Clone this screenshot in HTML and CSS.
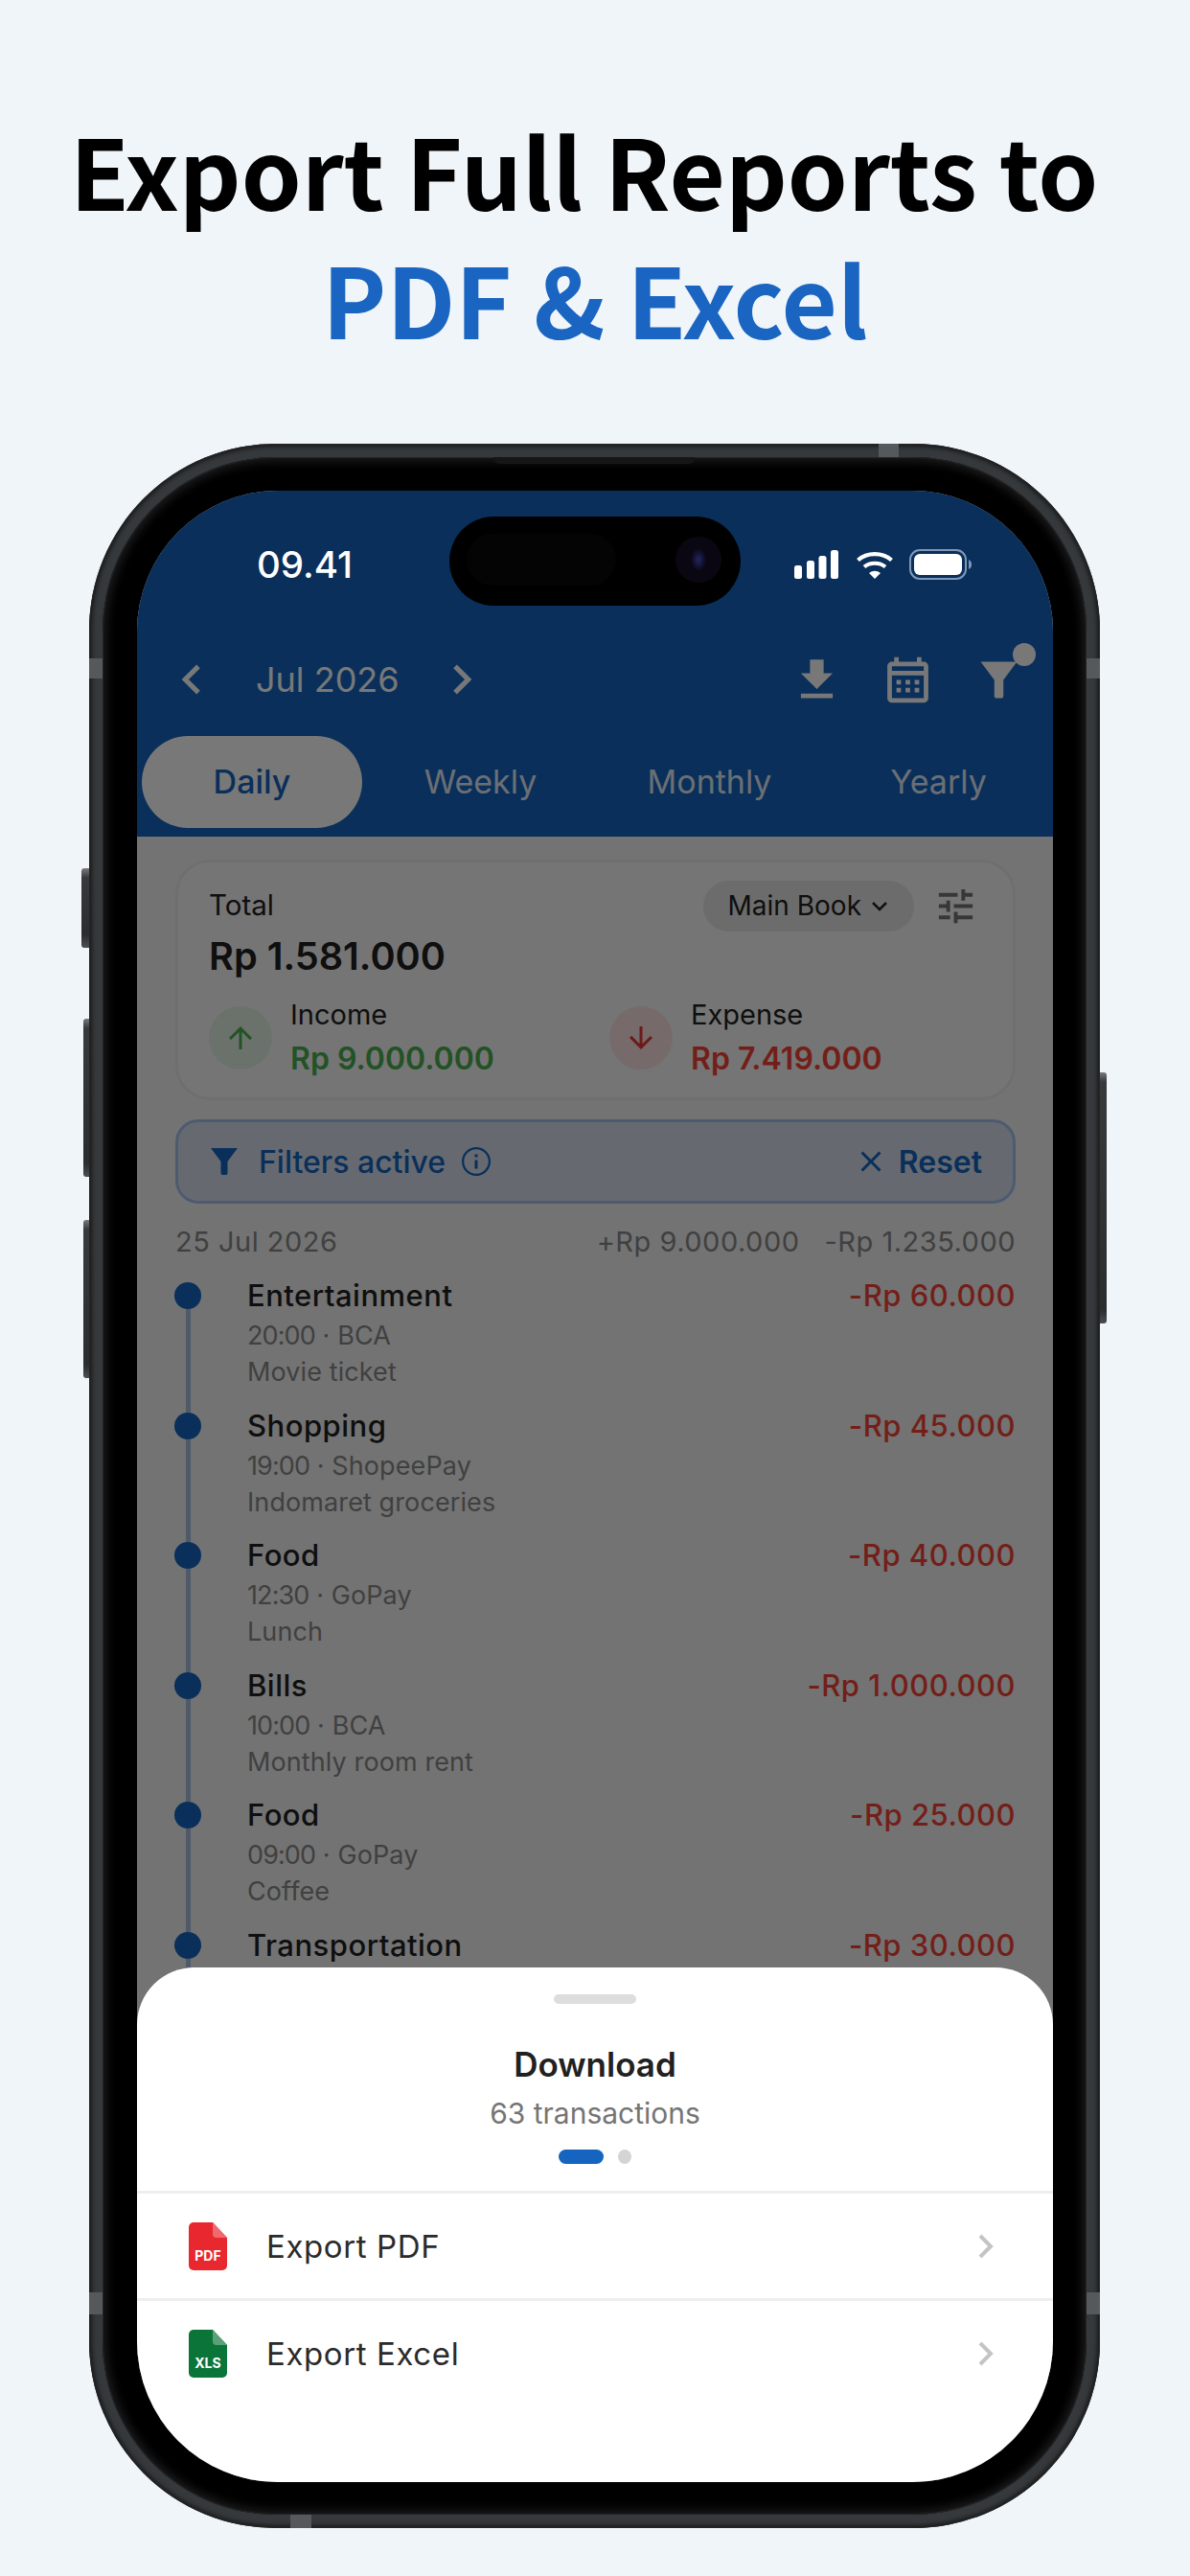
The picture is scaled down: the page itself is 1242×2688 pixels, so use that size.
FILE: index.html
```html
<!doctype html>
<html>
<head>
<meta charset=utf8>
<title>Export Full Reports</title>
<link rel="stylesheet" href="styles.css">
</head>
<body>
<h1 class="headline">Export Full Reports to&nbsp;<br><span class="headline-blue">PDF &amp; Excel</span></h1>

<div class="phone">
    <span class="btn btn-a"></span>
    <span class="btn btn-b"></span>
    <span class="btn btn-c"></span>
    <span class="btn btn-d"></span>
    <span class="band band-top"></span>
    <span class="band band-bottom"></span>
    <span class="band band-l1"></span>
    <span class="band band-l2"></span>
    <span class="band band-r1"></span>
    <span class="band band-r2"></span>

    <div class="bezel">
        <span class="speaker"></span>
        <div class="screen">
            <div class="statusbar">
                <span class="time">09.41</span>
                <div class="status-icons">
                    <svg width="46" height="30" viewBox="0 0 46 30" fill="#fff"><rect x="0" y="16" width="8" height="14" rx="2.5"/><rect x="13" y="11" width="8" height="19" rx="2.5"/><rect x="25.500" y="6" width="8" height="24" rx="2.5"/><rect x="38" y="0" width="8" height="30" rx="2.5"/></svg>
                    <svg width="40" height="30" viewBox="0 0 40 30" fill="none" stroke="#fff" stroke-width="4.2"><path d="M2.500 10.500C12 2 28 2 37.500 10.500"/><path d="M9 17.500C15 12.500 25 12.500 31 17.500"/><path d="M14 24L20 30L26 24C22 21 18 21 14 24Z" fill="#fff" stroke="none"/></svg>
                    <svg class="battery" width="66" height="32" viewBox="0 0 66 32"><rect x="1" y="1" width="58" height="30" rx="10" fill="none" stroke="#7f98b8" stroke-width="2"/><rect x="5" y="5" width="50" height="22" rx="6" fill="#fff"/><path d="M62 11c2.500 1 3 3 3 5s-.5 4-3 5z" fill="#7f98b8"/></svg>
                </div>
            </div>

            <div class="appbar">
                <svg class="chev" viewBox="0 0 24 24"><path d="M15.410 7.410L14 6l-6 6 6 6 1.410-1.410L10.830 12z"/></svg>
                <span class="month">Jul 2026</span>
                <svg class="chev" viewBox="0 0 24 24"><path d="M8.590 16.590L10 18l6-6-6-6-1.410 1.410L13.170 12z"/></svg>
                <div class="appbar-actions">
                    <svg class="action" viewBox="0 0 24 24"><path d="M19 9h-4V3H9v6H5l7 7 7-7zM5 18v2h14v-2H5z"/></svg>
                    <svg class="action" viewBox="0 0 24 24"><path d="M19 4h-1V2h-2v2H8V2H6v2H5c-1.100 0-2 .9-2 2v14c0 1.100.9 2 2 2h14c1.100 0 2-.9 2-2V6c0-1.100-.9-2-2-2zm0 16H5V10h14v10zM5 8V6h14v2H5zm2 4h2v2H7zm4 0h2v2h-2zm4 0h2v2h-2zm-8 3.500h2v2H7zm4 0h2v2h-2zm4 0h2v2h-2z"/></svg>
                    <span class="action-wrap">
                        <svg class="action" viewBox="0 0 24 24"><path d="M4 4h16l-6 8v7c0 .55-.45 1-1 1h-2c-.55 0-1-.45-1-1v-7z"/></svg>
                        <span class="action-dot"></span>
                    </span>
                </div>
            </div>

            <div class="tabs">
                <span class="tab tab-active">Daily</span>
                <span class="tab">Weekly</span>
                <span class="tab">Monthly</span>
                <span class="tab">Yearly</span>
            </div>

            <div class="content">
                <div class="card">
                    <div class="card-top">
                        <span class="total-label">Total</span>
                        <span class="book"><span class="book-name">Main Book</span>
                            <svg width="18" height="12" viewBox="0 0 18 12" fill="none" stroke="#222" stroke-width="2.500"><path d="M2 2l7 7 7-7"/></svg>
                        </span>
                        <svg class="tune" viewBox="0 0 24 24"><path d="M3 17v2h6v-2H3zM3 5v2h10V5H3zm10 16v-2h8v-2h-8v-2h-2v6h2zM7 9v2H3v2h4v2h2V9H7zm14 4v-2H11v2h10zm-6-4h2V7h4V5h-4V3h-2v6z"/></svg>
                    </div>
                    <div class="total-value">Rp 1.581.000</div>
                    <div class="stats">
                        <div class="stat">
                            <span class="stat-ico stat-ico-in"><svg width="36" height="36" viewBox="0 0 24 24"><path d="M4 12l1.410 1.410L11 7.830V20h2V7.830l5.580 5.590L20 12l-8-8-8 8z"/></svg></span>
                            <div>
                                <div class="stat-label">Income</div>
                                <div class="stat-value green">Rp 9.000.000</div>
                            </div>
                        </div>
                        <div class="stat">
                            <span class="stat-ico stat-ico-out"><svg width="36" height="36" viewBox="0 0 24 24"><path d="M20 12l-1.410-1.410L13 16.170V4h-2v12.170l-5.580-5.590L4 12l8 8 8-8z"/></svg></span>
                            <div>
                                <div class="stat-label">Expense</div>
                                <div class="stat-value red">Rp 7.419.000</div>
                            </div>
                        </div>
                    </div>
                </div>

                <div class="filterbar">
                    <svg class="filter-ico" viewBox="0 0 24 24"><path d="M4 4h16l-6 8v7c0 .55-.45 1-1 1h-2c-.55 0-1-.45-1-1v-7z"/></svg>
                    <span class="filter-text">Filters active</span>
                    <svg class="info-ico" viewBox="0 0 24 24"><path d="M11 7h2v2h-2zm0 4h2v6h-2zm1-9C6.480 2 2 6.480 2 12s4.480 10 10 10 10-4.480 10-10S17.520 2 12 2zm0 18.500c-4.690 0-8.500-3.810-8.500-8.500S7.310 3.500 12 3.500s8.500 3.810 8.500 8.500-3.810 8.500-8.500 8.500z"/></svg>
                    <svg class="close-ico" viewBox="0 0 24 24"><path d="M19 6.410L17.590 5 12 10.590 6.410 5 5 6.410 10.590 12 5 17.590 6.410 19 12 13.410 17.590 19 19 17.590 13.410 12z"/></svg>
                    <span class="reset">Reset</span>
                </div>

                <div class="dayrow">
                    <span>25 Jul 2026</span>
                    <span class="day-sums"><span>+Rp 9.000.000</span><span>-Rp 1.235.000</span></span>
                </div>

                <div class="tx">
                    <div class="tx-rail"><span class="tx-dot"></span><span class="tx-line"></span></div>
                    <div class="tx-body"><div class="tx-title">Entertainment</div><div class="tx-sub"><span class="tx-time">20:00</span> · BCA</div><div class="tx-sub">Movie ticket</div></div>
                    <div class="tx-amount">-Rp 60.000</div>
                </div>
                <div class="tx">
                    <div class="tx-rail"><span class="tx-dot"></span><span class="tx-line"></span></div>
                    <div class="tx-body"><div class="tx-title">Shopping</div><div class="tx-sub"><span class="tx-time">19:00</span> · ShopeePay</div><div class="tx-sub">Indomaret groceries</div></div>
                    <div class="tx-amount">-Rp 45.000</div>
                </div>
                <div class="tx">
                    <div class="tx-rail"><span class="tx-dot"></span><span class="tx-line"></span></div>
                    <div class="tx-body"><div class="tx-title">Food</div><div class="tx-sub"><span class="tx-time">12:30</span> · GoPay</div><div class="tx-sub">Lunch</div></div>
                    <div class="tx-amount">-Rp 40.000</div>
                </div>
                <div class="tx">
                    <div class="tx-rail"><span class="tx-dot"></span><span class="tx-line"></span></div>
                    <div class="tx-body"><div class="tx-title">Bills</div><div class="tx-sub"><span class="tx-time">10:00</span> · BCA</div><div class="tx-sub">Monthly room rent</div></div>
                    <div class="tx-amount">-Rp 1.000.000</div>
                </div>
                <div class="tx">
                    <div class="tx-rail"><span class="tx-dot"></span><span class="tx-line"></span></div>
                    <div class="tx-body"><div class="tx-title">Food</div><div class="tx-sub"><span class="tx-time">09:00</span> · GoPay</div><div class="tx-sub">Coffee</div></div>
                    <div class="tx-amount">-Rp 25.000</div>
                </div>
                <div class="tx">
                    <div class="tx-rail"><span class="tx-dot"></span><span class="tx-line"></span></div>
                    <div class="tx-body"><div class="tx-title">Transportation</div></div>
                    <div class="tx-amount">-Rp 30.000</div>
                </div>
            </div>

            <div class="scrim"></div>
            <div class="island">
                <span class="island-pill"></span>
                <span class="island-lens"></span>
            </div>

            <div class="sheet">
                <span class="handle"></span>
                <div class="sheet-title">Download</div>
                <div class="sheet-sub">63 transactions</div>
                <div class="pager"><span class="pager-on"></span><span class="pager-off"></span></div>
                <div class="sheet-row">
                    <svg class="doc" viewBox="0 0 40 50"><path d="M5 0H25L40 16V45a5 5 0 0 1-5 5H5a5 5 0 0 1-5-5V5a5 5 0 0 1 5-5z" fill="#e8272e"/><path d="M25 0L40 16H29a4 4 0 0 1-4-4z" fill="#f0696c"/><text x="20" y="39.500" text-anchor="middle" class="doc-text">PDF</text></svg>
                    <span class="sheet-label">Export PDF</span>
                    <svg class="sheet-chev" viewBox="0 0 16 26"><path d="M2 2l11 11L2 24"/></svg>
                </div>
                <div class="sheet-row">
                    <svg class="doc" viewBox="0 0 40 50"><path d="M5 0H25L40 16V45a5 5 0 0 1-5 5H5a5 5 0 0 1-5-5V5a5 5 0 0 1 5-5z" fill="#0b7539"/><path d="M25 0L40 16H29a4 4 0 0 1-4-4z" fill="#5ba077"/><text x="20" y="39.500" text-anchor="middle" class="doc-text">XLS</text></svg>
                    <span class="sheet-label">Export Excel</span>
                    <svg class="sheet-chev" viewBox="0 0 16 26"><path d="M2 2l11 11L2 24"/></svg>
                </div>
            </div>
        </div>
    </div>
</div>
</body>
</html>
```
FILE: styles.css
```css
html, body { margin: 0; padding: 0; }
body {
    width: 1242px;
    height: 2688px;
    overflow: hidden;
    background: #f0f5fa;
    font-family: Inter, sans-serif;
}

.headline {
    margin: 0;
    padding-top: 109px;
    height: 351px;
    box-sizing: border-box;
    text-align: center;
    font-family: "Noto Sans CJK JP", "Noto Sans", sans-serif;
    font-size: 100.700px;
    line-height: 134px;
    font-weight: 700;
    color: #000;
}
.headline-blue { color: #1a65c2; }

/* device frame */
.phone {
    position: relative;
    box-sizing: border-box;
    margin: 112px 0 0 93px;
    width: 1055px;
    height: 2175px;
    padding: 14px;
    border-radius: 195px;
    background: #36393b;
    box-shadow: inset 0 0 0 1px #232527, inset 0 0 4px 3px rgba(0,0,0,.55);
}
.bezel {
    position: relative;
    box-sizing: border-box;
    height: 100%;
    padding: 35px 35px 34px 36px;
    border-radius: 181px;
    background: #000;
    box-shadow: inset 0 0 0 1px #232527, inset 0 0 10px 5px #1a1a1a;
}
.speaker {
    position: absolute;
    top: 0; left: 408px;
    width: 210px; height: 7px;
    background: #161616;
    border-radius: 0 0 6px 6px;
}
.btn {
    position: absolute;
    width: 6px;
    background: linear-gradient(to bottom, #77797b 0, #37393b 10px, #2a2c2e calc(100% - 14px), #4c4f51 100%);
    border-radius: 3px 0 0 3px;
}
.btn-a { left: -8px; width: 8px; top: 443px; height: 83px; }
.btn-b { left: -6px; top: 600px; height: 165px; }
.btn-c { left: -6px; top: 810px; height: 165px; }
.btn-d { right: -7px; width: 7px; top: 656px; height: 262px; border-radius: 0 3px 3px 0; }
.band { position: absolute; background: #55595b; }
.band-top { left: 824px; top: 0; width: 21px; height: 14px; }
.band-bottom { left: 210px; bottom: 0; width: 22px; height: 14px; }
.band-l1 { left: 0; top: 224px; width: 14px; height: 21px; }
.band-r1 { right: 0; top: 224px; width: 14px; height: 21px; }
.band-l2 { left: 0; top: 1929px; width: 14px; height: 23px; }
.band-r2 { right: 0; top: 1929px; width: 14px; height: 23px; }

.screen {
    position: relative;
    height: 100%;
    overflow: hidden;
    border-radius: 147px;
    background: #f5f5f5;
}

.statusbar {
    position: relative;
    z-index: 3;
    display: flex;
    align-items: center;
    justify-content: space-between;
    height: 154px;
    padding: 0 84px 0 125px;
    background: #0a2f5b;
}
.time { font-size: 38.500px; font-weight: 500; color: #fff; }
.status-icons { display: flex; align-items: center; gap: 18px; }
.battery { margin-left: -2px; }

.appbar {
    display: flex;
    align-items: center;
    height: 86px;
    padding: 0 28px 0 26px;
    background: #1565c0;
}
.chev { width: 62px; height: 62px; fill: #fff; }
.month { margin: 0 34px 0 36px; font-size: 36px; color: #fff; }
.appbar-actions { display: flex; gap: 38px; margin-left: auto; }
.action { display: block; width: 57px; height: 57px; fill: #fff; }
.action-wrap { position: relative; display: block; }
.action-dot {
    position: absolute;
    top: -10px; left: 43px;
    width: 24px; height: 24px;
    border-radius: 50%;
    background: #fff;
}

.tabs {
    display: grid;
    grid-template-columns: repeat(4, 1fr);
    height: 121px;
    padding: 16px 0 9px;
    box-sizing: border-box;
    background: #1565c0;
}
.tab {
    display: flex;
    align-items: center;
    justify-content: center;
    padding-bottom: 2px;
    font-size: 34px;
    color: rgba(255,255,255,.9);
}
.tab-active {
    margin: 0 4px 0 5px;
    border-radius: 48px;
    background: #fff;
    color: #1565c0;
    font-weight: 500;
}

.content { padding: 24px 39px 0 40px; }

.card {
    box-sizing: border-box;
    height: 251px;
    padding: 19px 36px 0 32px;
    border: 3px solid #ececec;
    border-radius: 36px;
    background: #f8f8f8;
}
.card-top { display: flex; align-items: center; }
.total-label { padding-bottom: 3px; font-size: 29.500px; color: #212121; }
.book {
    display: flex;
    align-items: center;
    gap: 10px;
    margin-left: auto;
    height: 53px;
    padding: 0 27px 0 26px;
    border-radius: 27px;
    background: #e6e6e6;
    font-size: 28px;
    color: #212121;
}
.book-name { padding-bottom: 2px; }
.tune { width: 47px; height: 47px; margin-left: 20px; fill: #757575; }
.total-value { margin-top: 2px; font-size: 39.700px; line-height: 48px; font-weight: 600; color: #212121; }
.stats { display: grid; grid-template-columns: 418px 1fr; margin-top: 19px; }
.stat { display: flex; align-items: center; gap: 19px; }
.stat-ico {
    display: flex;
    align-items: center;
    justify-content: center;
    width: 66px; height: 66px;
    border-radius: 50%;
}
.stat-ico-in { background: #e2f3e3; fill: #4caf50; }
.stat-ico-out { background: #fbe3e1; fill: #e53935; }
.stat-label { font-size: 29px; line-height: 36px; color: #212121; }
.stat-value { margin-top: 8px; font-size: 32px; line-height: 40px; font-weight: 600; }
.green { color: #4caf50; }
.red { color: #f44336; }

.filterbar {
    display: flex;
    align-items: center;
    box-sizing: border-box;
    height: 88px;
    margin-top: 20px;
    padding: 0 32px 0 27px;
    border: 3px solid #a4c2ee;
    border-radius: 24px;
    background: #d9e2ee;
    color: #1565c0;
}
.filter-ico { width: 42px; height: 42px; fill: #1565c0; }
.filter-text { margin-left: 15px; font-size: 32px; font-weight: 500; }
.info-ico { width: 36px; height: 36px; margin-left: 14px; fill: #1565c0; }
.close-ico { width: 36px; height: 36px; margin-left: auto; fill: #1565c0; }
.reset { margin-left: 11px; font-size: 32px; font-weight: 600; }

.dayrow {
    display: flex;
    justify-content: space-between;
    height: 40px;
    margin: 20px 0 22px;
    font-size: 29px;
    line-height: 40px;
    letter-spacing: .5px;
    color: #888;
}
.day-sums { display: flex; gap: 26px; }

.tx { display: flex; height: 135.500px; }
.tx-rail { display: flex; flex-direction: column; align-items: center; width: 28px; margin-left: -1px; }
.tx-dot { flex: none; width: 28px; height: 28px; border-radius: 50%; background: #1565c0; }
.tx-line { flex: 1; width: 5px; background: #a9c0dd; }
.tx-body { flex: 1; padding-left: 48px; }
.tx-title { font-size: 31px; line-height: 28px; margin-bottom: 9px; font-weight: 450; letter-spacing: .5px; color: #212121; }
.tx-sub { font-size: 27px; line-height: 38px; letter-spacing: .1px; color: #888; }
.tx-time { letter-spacing: -.9px; }
.tx-amount { font-size: 31px; line-height: 28px; font-weight: 450; letter-spacing: .5px; color: #f44336; }

/* dimmed layer under the sheet */
.scrim {
    position: absolute;
    top: 0; left: 0; right: 0; bottom: 0;
    z-index: 2;
    background: rgba(0,0,0,.53);
}

.island {
    position: absolute;
    top: 27px; left: 326px;
    z-index: 4;
    width: 304px; height: 93px;
    border-radius: 47px;
    background: #000;
}
.island-pill {
    position: absolute;
    top: 18px; left: 18px;
    width: 156px; height: 54px;
    border-radius: 27px;
    background: #040404;
}
.island-lens {
    position: absolute;
    top: 21px; left: 236px;
    width: 48px; height: 48px;
    border-radius: 50%;
    background: radial-gradient(ellipse 8px 12px, #26265e 0, #14143a 55%, #0a0712 100%);
}

.sheet {
    position: absolute;
    left: 0; right: 0; bottom: 0;
    z-index: 5;
    display: flex;
    flex-direction: column;
    height: 537px;
    border-radius: 60px 60px 0 0;
    background: #fff;
    text-align: center;
}
.handle {
    flex: none;
    width: 86px; height: 10px;
    margin: 28px auto 0;
    border-radius: 5px;
    background: #ddd;
}
.sheet-title { margin-top: 41px; font-size: 35px; line-height: 44px; font-weight: 600; color: #212121; }
.sheet-sub { margin-top: 9px; font-size: 30px; line-height: 40px; color: #757575; }
.pager { display: flex; justify-content: center; gap: 15px; margin: 18px 0 28px; }
.pager-on { width: 47px; height: 15px; border-radius: 8px; background: #1565c0; }
.pager-off { width: 14px; height: 15px; border-radius: 50%; background: #d4d4d4; }
.sheet-row {
    display: flex;
    align-items: center;
    height: 112px;
    box-sizing: border-box;
    padding: 0 62px 0 54px;
    border-top: 3px solid #eee;
}
.doc { width: 40px; height: 50px; }
.doc-text { font-family: Inter, sans-serif; font-size: 14px; font-weight: 700; fill: #fff; }
.sheet-label { margin-left: 41px; font-size: 33px; letter-spacing: .6px; color: #2b2b2b; }
.sheet-chev {
    width: 16px; height: 26px;
    margin-left: auto;
    fill: none;
    stroke: #c4c4c4;
    stroke-width: 4;
}
```
